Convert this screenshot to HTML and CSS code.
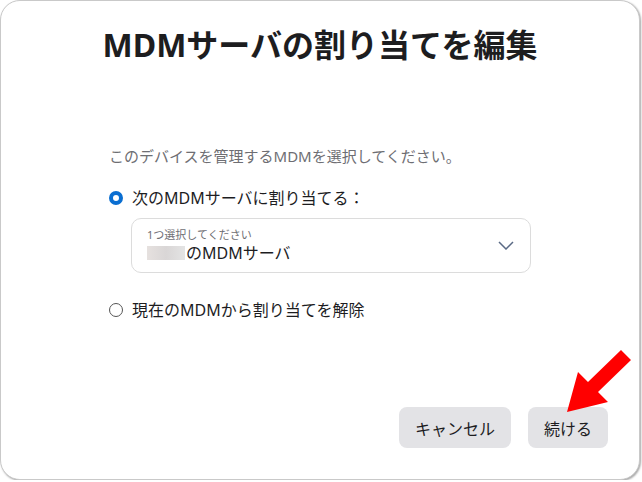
FILE: index.html
```html
<!DOCTYPE html>
<html lang="ja">
<head>
    <meta charset="UTF-8">
    <meta name="viewport" content="width=device-width, initial-scale=1.0">
    <title>MDMサーバの割り当てを編集</title>
    <link rel="stylesheet" href="styles.css">
</head>
<body>
    <div class="dialog">
        <h1 class="dialog-title">MDMサーバの割り当てを編集</h1>

        <div class="dialog-body">
            <p class="intro">このデバイスを管理するMDMを選択してください。</p>

            <label class="option">
                <span class="radio checked"></span>
                <span>次のMDMサーバに割り当てる：</span>
            </label>

            <div class="picker">
                <div class="picker-text">
                    <span class="picker-label">1つ選択してください</span>
                    <span class="picker-value"><span class="blurred"></span>のMDMサーバ</span>
                </div>
                <svg class="chevron" width="16" height="9" viewBox="0 0 16 9">
                    <polyline points="1,1 8,8 15,1" fill="none" stroke="#5a6a85" stroke-width="1.5"/>
                </svg>
            </div>

            <label class="option option-last">
                <span class="radio"></span>
                <span>現在のMDMから割り当てを解除</span>
            </label>
        </div>

        <div class="dialog-footer">
            <button class="btn">キャンセル</button>
            <button class="btn">続ける</button>
        </div>
    </div>

    <!-- annotation arrow pointing at the continue button -->
    <svg class="pointer" width="642" height="482" viewBox="0 0 642 482">
        <polygon points="621,350 588,382 578,372 567,412 608,402 598,392 631,360" fill="#ff0000"/>
    </svg>
</body>
</html>
```

FILE: styles.css
```css
body {
    margin: 0;
    padding: 0;
    background: #ffffff;
    font-family: "Noto Sans", "Noto Sans CJK JP", sans-serif;
    color: #1d1d1f;
}

.dialog {
    box-sizing: border-box;
    width: 640px;
    height: 480px;
    background: white;
    border: 1px solid #c9c9c9;
    border-radius: 20px;
    box-shadow: 1px 1px 2px rgba(0, 0, 0, 0.35);
    display: flex;
    flex-direction: column;
    padding: 24px 31px 31px;
}

.dialog-title {
    margin: 0;
    font-size: 32px;
    line-height: 40px;
    font-weight: bold;
    text-align: center;
    color: #1d1d1f;
}

.dialog-body {
    width: 422px;
    margin: 0 auto;
    padding-top: 80px;
    display: flex;
    flex-direction: column;
}

.intro {
    margin: 0;
    font-size: 15px;
    line-height: 22px;
    color: #6e6e73;
}

.option {
    display: flex;
    align-items: center;
    gap: 9px;
    margin-top: 19px;
    font-size: 16px;
    line-height: 24px;
}

.option-last {
    margin-top: 25px;
}

.radio {
    box-sizing: border-box;
    width: 14px;
    height: 14px;
    border-radius: 50%;
    border: 1.5px solid #555;
}

.radio.checked {
    border: 4.5px solid #0a6ed1;
}

.picker {
    box-sizing: border-box;
    margin: 8px 0 0 22px;
    height: 55px;
    border: 1px solid #dcdcdc;
    border-radius: 10px;
    padding: 9px 16px 8px 15px;
    display: flex;
    align-items: center;
    justify-content: space-between;
}

.picker-text {
    display: flex;
    flex-direction: column;
}

.picker-label {
    font-size: 11px;
    line-height: 14px;
    color: #6e6e73;
}

.picker-value {
    display: flex;
    align-items: center;
    font-size: 16px;
    line-height: 22px;
}

.blurred {
    width: 38px;
    height: 14px;
    margin-right: 1px;
    background: linear-gradient(90deg, #e6e1df, #d9d6d6 50%, #e4e4e4);
}

.chevron {
    margin-bottom: 2px;
}

.dialog-footer {
    margin-top: auto;
    display: flex;
    justify-content: flex-end;
    gap: 17px;
}

.btn {
    height: 41px;
    padding: 0 16px;
    border: none;
    border-radius: 8px;
    background: #e3e3e6;
    font-family: inherit;
    font-size: 16px;
    color: #1d1d1f;
}

.pointer {
    position: absolute;
    top: 0;
    left: 0;
    pointer-events: none;
}
```
